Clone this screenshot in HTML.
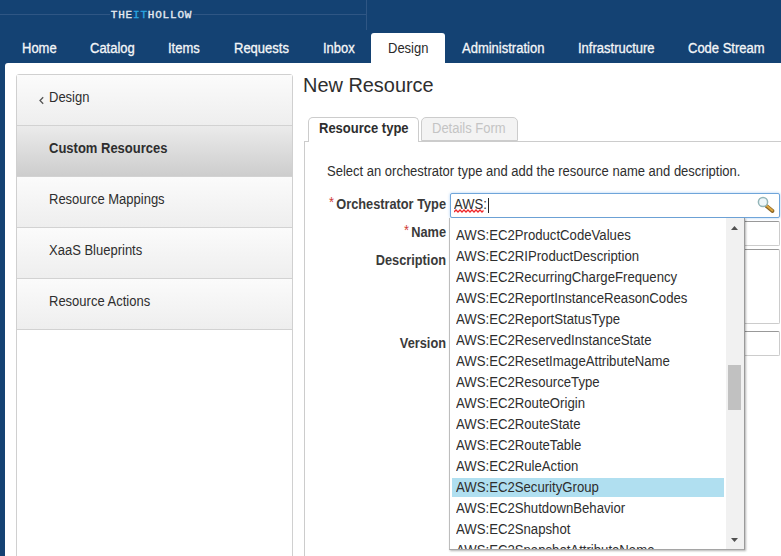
<!DOCTYPE html>
<html>
<head>
<meta charset="utf-8">
<title>New Resource</title>
<style>
html,body{margin:0;padding:0;}
body{width:781px;height:556px;overflow:hidden;background:#144273;font-family:"Liberation Sans",Arial,sans-serif;position:relative;color:#333;}
.abs{position:absolute;}
.t{position:absolute;white-space:nowrap;font-size:14px;line-height:18px;height:18px;transform:scaleX(.9286);transform-origin:0 50%;color:#2e2e2e;}
.r{transform-origin:100% 50%;text-align:right;transform:scaleX(.912);color:#3a3a3a;}
#hline{left:0;top:14px;width:366px;height:1px;background:#2f5684;}
#vline{left:366px;top:0;width:1px;height:30px;background:#2f5684;}
#logo{left:110px;top:9.5px;height:11px;width:83px;background:#144273;color:#e6ebf2;font-family:"Liberation Mono",monospace;font-weight:normal;font-size:11px;line-height:11px;letter-spacing:0.8px;-webkit-text-stroke:0.35px #e6ebf2;text-align:center;white-space:nowrap;}
#logo b{color:#2aa5e0;font-weight:normal;-webkit-text-stroke:0.35px #2aa5e0;}
.nav{top:39px;color:#f4f6f8;-webkit-text-stroke:0.3px #f4f6f8;}
#seltab{left:371px;top:33px;width:74px;height:31px;background:#fff;border-radius:3px 3px 0 0;}
#content{left:5px;top:63px;width:790px;height:500px;background:#fff;border-radius:3px 0 0 0;}
#side{left:16px;top:74px;width:275px;height:500px;border:1px solid #d0d0d0;border-radius:3px 3px 0 0;background:#fff;}
.si{position:absolute;left:0;width:275px;height:50px;border-bottom:1px solid #d2d2d2;background:linear-gradient(#fbfbfb,#eeeeee);}
.si.sel{background:linear-gradient(#ebebeb,#cdcdcd);}
.si .t{left:32px;top:13px;}
.si.sel .t{font-weight:bold;}
#title{left:303px;top:71.5px;font-size:20px;line-height:26px;height:26px;transform:scaleX(.996);}
.tab{position:absolute;top:117px;height:25px;border:1px solid #ccc;border-bottom:none;border-radius:5px 5px 0 0;box-sizing:border-box;}
#tab1{left:308px;width:111px;background:#fff;z-index:2;}
#tab2{left:421px;width:97px;background:#f3f3f3;height:24px;border-bottom:1px solid #ccc;}
#panel{left:304px;top:141px;width:500px;height:500px;border:1px solid #ccc;}
.star{color:#cf3a36;font-weight:normal;font-size:14px;position:relative;top:-2px;margin-right:2.5px;}
.inp{position:absolute;box-sizing:border-box;border:1px solid #ccc;border-top-color:#999;border-radius:2px;background:#fff;}
#dd{left:449px;top:218px;width:296px;height:332px;background:#fff;border:1px solid #bdbdbd;border-top:none;border-right-color:#9a9a9a;border-bottom-color:#a5a5a5;box-sizing:border-box;box-shadow:1px 1px 2px rgba(0,0,0,.3);overflow:hidden;}
.it{position:absolute;left:2px;width:272px;height:19px;}
.it .t{left:4px;top:0;line-height:19px;height:19px;transform:scaleX(.94);}
.it.hl{background:#b0dff0;}
#sb{left:276px;top:0;width:18px;height:331px;background:#f1f1f1;}
#thumb{left:278px;top:147px;width:13px;height:45px;background:#c1c1c1;}
</style>
</head>
<body>
<div class="abs" id="hline"></div>
<div class="abs" id="vline"></div>
<div class="abs" id="logo">THE<b>IT</b>HOLLOW</div>
<div class="abs" id="seltab"></div>
<div class="abs" id="content"></div>
<div class="t nav" style="left:21.5px">Home</div>
<div class="t nav" style="left:90px">Catalog</div>
<div class="t nav" style="left:167.5px">Items</div>
<div class="t nav" style="left:233.5px">Requests</div>
<div class="t nav" style="left:322.5px">Inbox</div>
<div class="t nav" style="left:388px;color:#2a2a2a;-webkit-text-stroke:0">Design</div>
<div class="t nav" style="left:462px">Administration</div>
<div class="t nav" style="left:577.5px">Infrastructure</div>
<div class="t nav" style="left:688px">Code Stream</div>

<div class="abs" id="side">
  <div class="si" style="top:0"><svg class="abs" style="left:21px;top:21px" width="7" height="9" viewBox="0 0 7 9"><path d="M5.2 1.2 L2 4.5 L5.2 7.8" fill="none" stroke="#555" stroke-width="1.3"/></svg><div class="t">Design</div></div>
  <div class="si sel" style="top:51px"><div class="t">Custom Resources</div></div>
  <div class="si" style="top:102px"><div class="t">Resource Mappings</div></div>
  <div class="si" style="top:153px"><div class="t">XaaS Blueprints</div></div>
  <div class="si" style="top:204px"><div class="t">Resource Actions</div></div>
</div>

<div class="t" id="title">New Resource</div>
<div class="abs" id="panel"></div>
<div class="tab" id="tab1"><div class="t" style="left:10.3px;top:1px;font-weight:bold">Resource type</div></div>
<div class="tab" id="tab2"><div class="t" style="left:10px;top:1px;color:#c4c4c4">Details Form</div></div>

<div class="t" style="left:327px;top:162px">Select an orchestrator type and add the resource name and description.</div>

<div class="t r" style="left:306px;width:140px;top:195px;font-weight:bold"><span class="star">*</span>Orchestrator Type</div>
<div class="t r" style="left:306px;width:140px;top:223px;font-weight:bold"><span class="star">*</span>Name</div>
<div class="t r" style="left:306px;width:140px;top:251px;font-weight:bold">Description</div>
<div class="t r" style="left:306px;width:140px;top:334px;font-weight:bold">Version</div>

<div class="inp" style="left:450px;top:193px;width:330px;height:25px;border-color:#6fa5da;box-shadow:0 0 3px rgba(102,165,233,.55)"></div>
<div class="t" style="left:454px;top:195px">AWS:</div>
<svg class="abs" style="left:454px;top:209px" width="30" height="4" viewBox="0 0 30 4"><path d="M0 3 L2 1 L4 3 L6 1 L8 3 L10 1 L12 3 L14 1 L16 3 L18 1 L20 3 L22 1 L24 3 L26 1 L28 3 L29.5 1.5" fill="none" stroke="#f0272a" stroke-width="1.25"/></svg>
<div class="abs" style="left:488px;top:198px;width:1px;height:15px;background:#222"></div>
<svg class="abs" style="left:755px;top:194px" width="22" height="22" viewBox="0 0 22 22">
  <line x1="11.5" y1="12" x2="17.5" y2="17" stroke="#8a6424" stroke-width="3.8" stroke-linecap="round"/>
  <line x1="11.5" y1="11.6" x2="17.3" y2="16.5" stroke="#dca640" stroke-width="2" stroke-linecap="round"/>
  <circle cx="8" cy="8" r="4.6" fill="#eef7fa" stroke="#93b5b8" stroke-width="1.5"/>
</svg>

<div class="inp" style="left:700px;top:221px;width:80px;height:25px"></div>
<div class="inp" style="left:700px;top:249px;width:80px;height:75px"></div>
<div class="inp" style="left:700px;top:331px;width:80px;height:25px"></div>

<div class="abs" id="dd">
  <div class="it" style="top:8px"><div class="t">AWS:EC2ProductCodeValues</div></div>
  <div class="it" style="top:29px"><div class="t">AWS:EC2RIProductDescription</div></div>
  <div class="it" style="top:50px"><div class="t">AWS:EC2RecurringChargeFrequency</div></div>
  <div class="it" style="top:71px"><div class="t">AWS:EC2ReportInstanceReasonCodes</div></div>
  <div class="it" style="top:92px"><div class="t">AWS:EC2ReportStatusType</div></div>
  <div class="it" style="top:113px"><div class="t">AWS:EC2ReservedInstanceState</div></div>
  <div class="it" style="top:134px"><div class="t">AWS:EC2ResetImageAttributeName</div></div>
  <div class="it" style="top:155px"><div class="t">AWS:EC2ResourceType</div></div>
  <div class="it" style="top:176px"><div class="t">AWS:EC2RouteOrigin</div></div>
  <div class="it" style="top:197px"><div class="t">AWS:EC2RouteState</div></div>
  <div class="it" style="top:218px"><div class="t">AWS:EC2RouteTable</div></div>
  <div class="it" style="top:239px"><div class="t">AWS:EC2RuleAction</div></div>
  <div class="it hl" style="top:260px"><div class="t">AWS:EC2SecurityGroup</div></div>
  <div class="it" style="top:281px"><div class="t">AWS:EC2ShutdownBehavior</div></div>
  <div class="it" style="top:302px"><div class="t">AWS:EC2Snapshot</div></div>
  <div class="it" style="top:323px"><div class="t">AWS:EC2SnapshotAttributeName</div></div>
  <div class="abs" id="sb"></div>
  <div class="abs" id="thumb"></div>
  <svg class="abs" style="left:281px;top:8px" width="7" height="4" viewBox="0 0 7 4"><path d="M0 4 L3.5 0 L7 4 Z" fill="#505050"/></svg>
  <svg class="abs" style="left:281px;top:320px" width="7" height="4" viewBox="0 0 7 4"><path d="M0 0 L3.5 4 L7 0 Z" fill="#505050"/></svg>
</div>
</body>
</html>
